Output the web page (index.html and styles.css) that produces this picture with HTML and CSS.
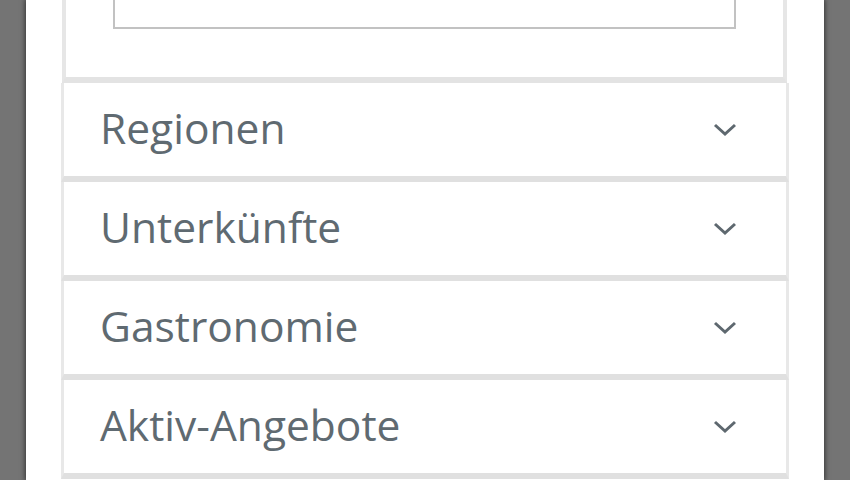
FILE: index.html
```html
<!DOCTYPE html>
<html>
<head>
<meta charset="UTF-8"/>
<title>Filter</title>
<link rel="stylesheet" href="styles.css">
</head>
<body>
<div class="page">
	<div class="searchBox">
		<div class="searchField"></div>
	</div>
	<ul class="accordion">
		<li><span class="label">Regionen</span><svg class="chevron" viewBox="0 0 24 14"><polyline points="2,2 12,11 22,2"/></svg></li>
		<li><span class="label">Unterkünfte</span><svg class="chevron" viewBox="0 0 24 14"><polyline points="2,2 12,11 22,2"/></svg></li>
		<li><span class="label">Gastronomie</span><svg class="chevron" viewBox="0 0 24 14"><polyline points="2,2 12,11 22,2"/></svg></li>
		<li><span class="label">Aktiv-Angebote</span><svg class="chevron" viewBox="0 0 24 14"><polyline points="2,2 12,11 22,2"/></svg></li>
	</ul>
</div>
</body>
</html>
```

FILE: styles.css
```css
	html, body { margin: 0; height: 100%; overflow: hidden; }
	body { background: #747474; font-family: 'Open Sans', sans-serif; }
	.page {
		margin: 0 26px; height: 100%; background: #fff;
		padding: 0 35px;
		box-shadow: 0 0 5px 1px rgba(0,0,0,0.55);
	}
	.searchBox {
		display: flow-root;
		margin: 0 2px 0 1px;
		height: 77px;
		padding: 0 47px 0 47px;
		border: 4px solid #e6e6e6; border-top: 0; border-bottom: 6px solid #e3e3e3;
	}
	.searchField {
		margin-top: -20px; height: 45px;
		border: 2px solid #c2c2c2;
	}
	ul.accordion { list-style: none; margin: 0; padding: 0; }
	ul.accordion > li {
		display: flex; align-items: center; justify-content: space-between;
		height: 93px;
		padding: 0 49px 0 36px;
		border: 3px solid #e8e8e8; border-top: 0; border-bottom: 6px solid #e0e0e0;
	}
	.label { font-size: 42.5px; color: #5f6a71; margin-bottom: 4px; }
	.chevron { width: 24px; height: 14px; margin-top: 1px; fill: none; stroke: #5e686f; stroke-width: 3; }
```
